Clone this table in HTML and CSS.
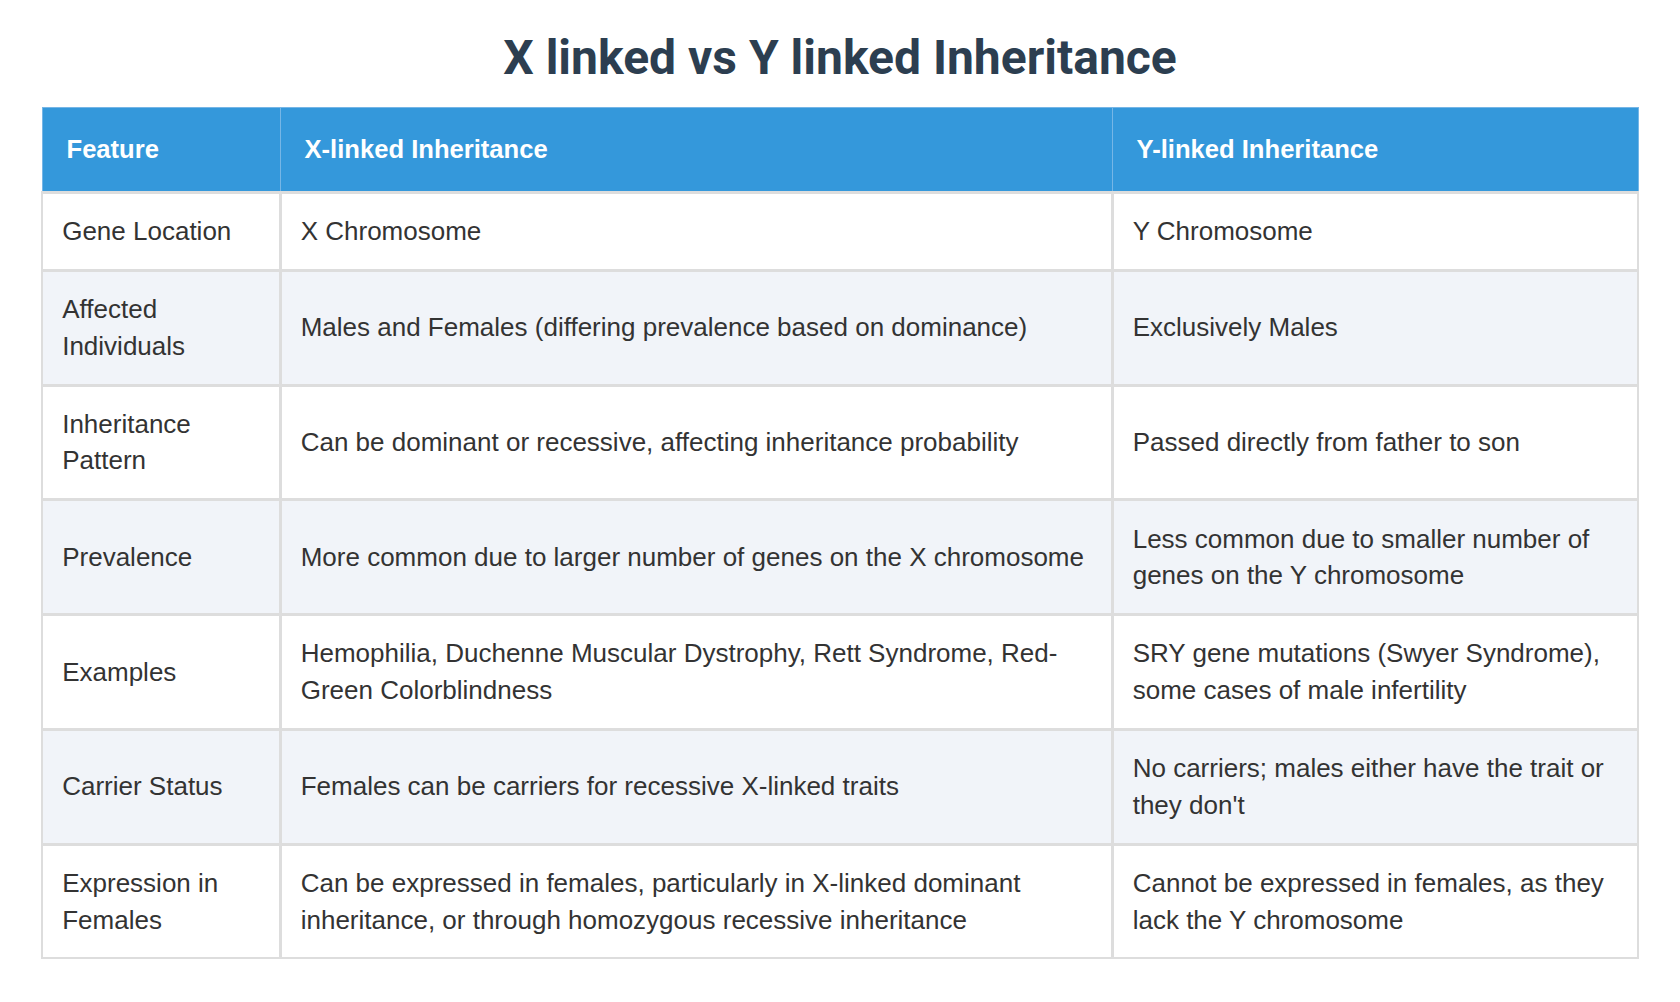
FILE: index.html
```
<!DOCTYPE html>
<html lang="en">
<head>
<meta charset="utf-8">
<title>X linked vs Y linked Inheritance</title>
<link rel="stylesheet" href="styles.css">
</head>
<body>
<div class="page">
  <h1 class="title">X linked vs Y linked Inheritance</h1>
  <table class="compare">
    <colgroup>
      <col class="col-feature">
      <col class="col-x">
      <col class="col-y">
    </colgroup>
    <thead>
      <tr>
        <th>Feature</th>
        <th>X-linked Inheritance</th>
        <th>Y-linked Inheritance</th>
      </tr>
    </thead>
    <tbody>
      <tr>
        <td>Gene Location</td>
        <td>X Chromosome</td>
        <td>Y Chromosome</td>
      </tr>
      <tr>
        <td>Affected Individuals</td>
        <td>Males and Females (differing prevalence based on dominance)</td>
        <td>Exclusively Males</td>
      </tr>
      <tr>
        <td>Inheritance Pattern</td>
        <td>Can be dominant or recessive, affecting inheritance probability</td>
        <td>Passed directly from father to son</td>
      </tr>
      <tr>
        <td>Prevalence</td>
        <td>More common due to larger number of genes on the X chromosome</td>
        <td>Less common due to smaller number of genes on the Y chromosome</td>
      </tr>
      <tr>
        <td>Examples</td>
        <td>Hemophilia, Duchenne Muscular Dystrophy, Rett Syndrome, Red-Green Colorblindness</td>
        <td>SRY gene mutations (Swyer Syndrome), some cases of male infertility</td>
      </tr>
      <tr>
        <td>Carrier Status</td>
        <td>Females can be carriers for recessive X-linked traits</td>
        <td>No carriers; males either have the trait or they don't</td>
      </tr>
      <tr>
        <td>Expression in Females</td>
        <td>Can be expressed in females, particularly in X-linked dominant inheritance, or through homozygous recessive inheritance</td>
        <td>Cannot be expressed in females, as they lack the Y chromosome</td>
      </tr>
    </tbody>
  </table>
</div>
</body>
</html>
```
FILE: styles.css
```
html, body {
  margin: 0;
  padding: 0;
  background: #ffffff;
}

body {
  font-family: "Liberation Sans", Arial, Helvetica, sans-serif;
  color: #333333;
}

.page {
  padding: 30px 41px 40px;
}

.title {
  margin: 0 0 21px;
  font-family: Roboto, "Liberation Sans", Arial, sans-serif;
  font-weight: 700;
  font-size: 48px;
  line-height: 56px;
  color: #2c3e50;
  text-align: center;
}

.compare {
  width: 100%;
  table-layout: fixed;
  border-collapse: collapse;
  font-size: 26px;
  line-height: 36.7px;
}

.col-feature { width: 238px; }
.col-x { width: 832px; }

.compare th {
  background: #3498db;
  color: #ffffff;
  font-weight: 700;
  font-size: 25.6px;
  text-align: left;
  padding: 23px 24px;
  border: 1px solid #76b6e6;
}

.compare td {
  padding: 19.2px;
  text-align: left;
  vertical-align: middle;
  border: 3px solid #dddddd;
}

.compare td:first-child { border-left-width: 2px; }
.compare td:last-child { border-right-width: 2px; }
.compare tbody tr:last-child td { border-bottom-width: 2px; }

.compare tbody tr:nth-child(even) td {
  background: #f1f4f9;
}
```
